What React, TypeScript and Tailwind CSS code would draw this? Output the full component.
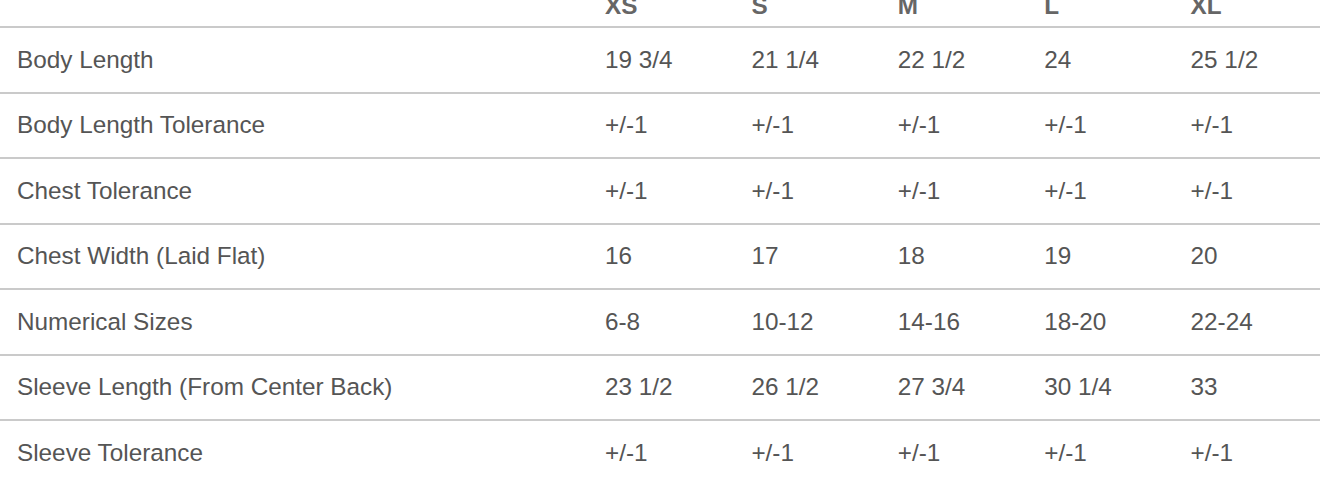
import React from "react";

const sizes = ["XS", "S", "M", "L", "XL"];
const rows: [string, string[]][] = [
  ["Body Length", ["19 3/4", "21 1/4", "22 1/2", "24", "25 1/2"]],
  ["Body Length Tolerance", ["+/-1", "+/-1", "+/-1", "+/-1", "+/-1"]],
  ["Chest Tolerance", ["+/-1", "+/-1", "+/-1", "+/-1", "+/-1"]],
  ["Chest Width (Laid Flat)", ["16", "17", "18", "19", "20"]],
  ["Numerical Sizes", ["6-8", "10-12", "14-16", "18-20", "22-24"]],
  ["Sleeve Length (From Center Back)", ["23 1/2", "26 1/2", "27 3/4", "30 1/4", "33"]],
  ["Sleeve Tolerance", ["+/-1", "+/-1", "+/-1", "+/-1", "+/-1"]],
];

export default function App() {
  return (
    <div
      className="w-[1320px] h-[480px] overflow-hidden bg-white text-[#555555] text-[24.3px]"
      style={{ fontFamily: '"Liberation Sans", Arial, sans-serif' }}
    >
      <div className="grid grid-cols-[588px_repeat(5,1fr)] h-[28px] border-b-2 border-[#cacaca] box-border">
        <div />
        {sizes.map((s) => (
          <div key={s} className="flex items-end pb-[8px] pl-[17px] h-[26px] font-bold text-[#666666] leading-[24px]">
            {s}
          </div>
        ))}
      </div>
      {rows.map(([label, vals]) => (
        <div
          key={label}
          className="grid grid-cols-[588px_repeat(5,1fr)] h-[65.5px] border-b-2 border-[#cacaca] box-border"
        >
          <div className="flex items-center pl-[17px]">{label}</div>
          {vals.map((v, i) => (
            <div key={i} className="flex items-center pl-[17px]">
              {v}
            </div>
          ))}
        </div>
      ))}
    </div>
  );
}
